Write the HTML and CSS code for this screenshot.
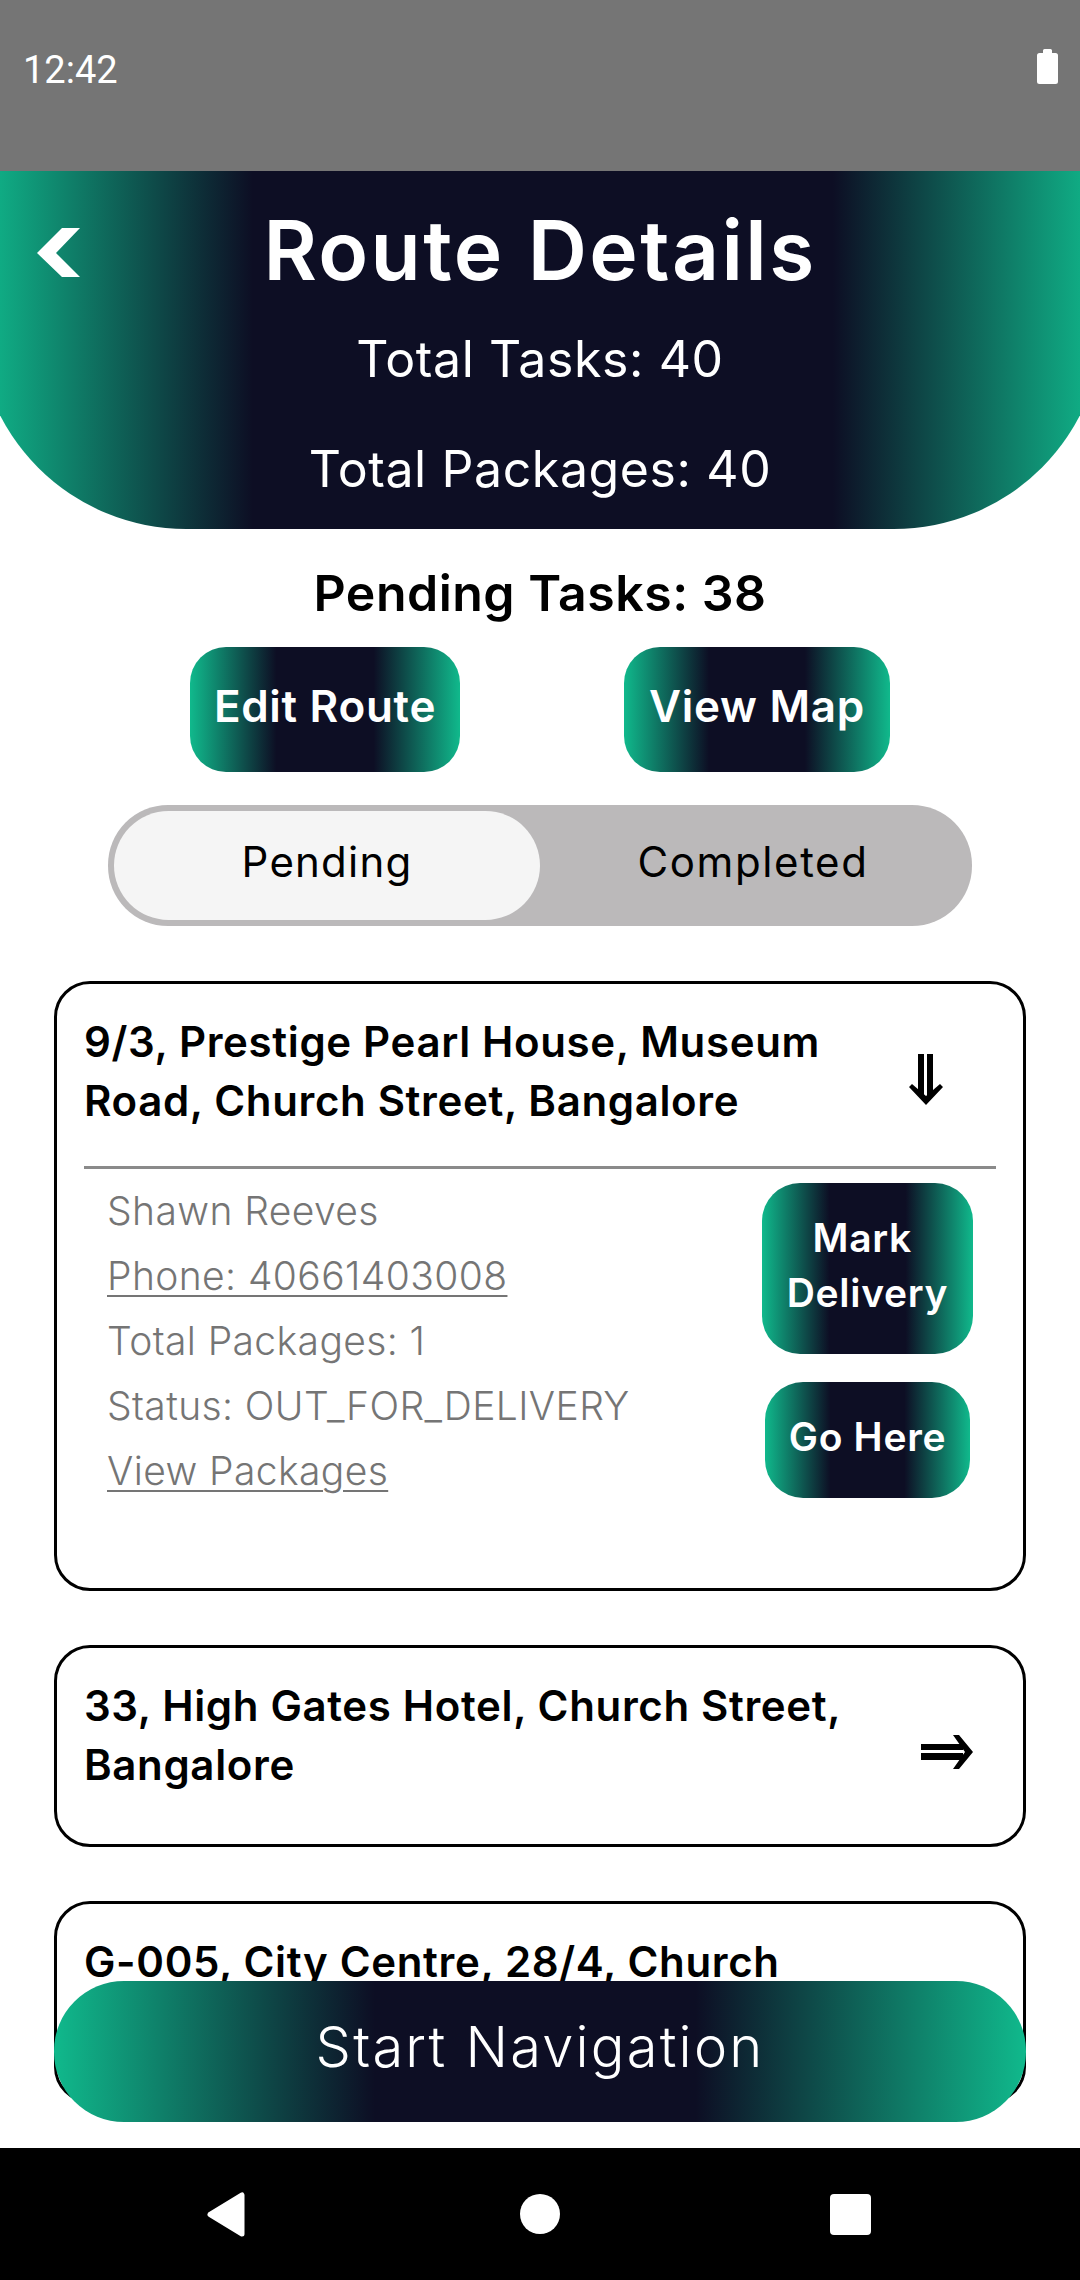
FILE: index.html
```html
<!DOCTYPE html>
<html>
<head>
    <title>Route Details</title>
    <link rel="stylesheet" href="styles.css">
</head>
<body>
    <div class="screen">
        <div class="status-bar">
            <span class="time">12:42</span>
            <svg class="battery" width="21" height="35" viewBox="0 0 21 35">
                <path d="M6 4V1.5Q6 0 7.500 0H13.500Q15 0 15 1.500V4H18.500Q21 4 21 6.500V32.500Q21 35 18.500 35H2.500Q0 35 0 32.500V6.500Q0 4 2.500 4Z" fill="#fff"/>
            </svg>
        </div>

        <div class="header">
            <svg class="back" width="43" height="49" viewBox="0 0 43 49">
                <polygon points="43,0 25,0 0,25 25,49 43,49 19,25" fill="#fff"/>
            </svg>
            <h1>Route Details</h1>
            <p class="total">Total Tasks: 40</p>
            <p class="total total-packages">Total Packages: 40</p>
        </div>

        <div class="content">
            <h2>Pending Tasks: 38</h2>
            <div class="actions">
                <button class="grad-btn edit-btn">Edit Route</button>
                <button class="grad-btn map-btn">View Map</button>
            </div>

            <div class="toggle">
                <div class="tab tab-active">Pending</div>
                <div class="tab">Completed</div>
            </div>

            <div class="card">
                <div class="card-head">
                    <div class="address">9/3, Prestige Pearl House, Museum<br>Road, Church Street, Bangalore</div>
                    <svg class="arrow-down" width="34" height="51" viewBox="0 0 34 51">
                        <rect x="9" y="0" width="6" height="42" fill="#000"/>
                        <rect x="18" y="0" width="6" height="42" fill="#000"/>
                        <polygon points="0,33 3,30 17,42 31,30 34,33 17,51" fill="#000"/>
                    </svg>
                </div>
                <div class="card-body">
                    <div class="info">
                        <div>Shawn Reeves</div>
                        <div class="link">Phone: 40661403008</div>
                        <div>Total Packages: 1</div>
                        <div>Status: OUT_FOR_DELIVERY</div>
                        <div class="link">View Packages</div>
                    </div>
                    <div class="card-actions">
                        <button class="grad-btn mark-btn">Mark&nbsp;<br>Delivery</button>
                        <button class="grad-btn here-btn">Go Here</button>
                    </div>
                </div>
            </div>

            <div class="card">
                <div class="card-head">
                    <div class="address">33, High Gates Hotel, Church Street,<br>Bangalore</div>
                    <svg class="arrow-right" width="52" height="34" viewBox="0 0 52 34">
                        <rect x="0" y="9" width="42" height="6" fill="#000"/>
                        <rect x="0" y="18" width="42" height="7" fill="#000"/>
                        <polygon points="32,0 38,0 52,17 38,34 32,34 44,17" fill="#000"/>
                    </svg>
                </div>
            </div>

            <div class="card">
                <div class="card-head">
                    <div class="address">G-005, City Centre, 28/4, Church<br>Street, Bangalore</div>
                    <svg class="arrow-right" width="52" height="34" viewBox="0 0 52 34">
                        <rect x="0" y="9" width="42" height="6" fill="#000"/>
                        <rect x="0" y="18" width="42" height="7" fill="#000"/>
                        <polygon points="32,0 38,0 52,17 38,34 32,34 44,17" fill="#000"/>
                    </svg>
                </div>
            </div>

            <button class="start-btn">Start Navigation</button>
        </div>

        <div class="nav-bar">
            <svg class="nav-back" width="38" height="45" viewBox="0 0 38 45">
                <polygon points="35,3 35,42 3,22.500" fill="#fff" stroke="#fff" stroke-width="5" stroke-linejoin="round"/>
            </svg>
            <div class="nav-home"></div>
            <div class="nav-recent"></div>
        </div>
    </div>
</body>
</html>
```

FILE: styles.css
```css
* {
    box-sizing: border-box;
}

body {
    margin: 0;
    font-family: Inter, "Noto Sans", sans-serif;
    background-color: #fff;
}

.screen {
    width: 1080px;
    height: 2280px;
    display: flex;
    flex-direction: column;
    overflow: hidden;
}

.status-bar {
    height: 171px;
    flex-shrink: 0;
    background-color: #757575;
    display: flex;
    justify-content: space-between;
    align-items: flex-start;
    padding: 48px 22px 0 23px;
}

.time {
    font-family: Roboto, sans-serif;
    font-size: 38px;
    line-height: 44px;
    color: #fff;
}

.battery {
    margin-top: 1px;
}

.header {
    position: relative;
    flex-shrink: 0;
    width: 1126px;
    margin-left: -23px;
    padding: 32px 0 25px;
    text-align: center;
    color: #fff;
    border-radius: 0 0 209px 209px;
    background: linear-gradient(to right, #10b98c 0%, #0d0e24 24.500%, #0d0e24 76%, #10b98c 100%);
}

.back {
    position: absolute;
    left: 60px;
    top: 57px;
}

h1 {
    margin: 0;
    font-size: 82px;
    line-height: 96px;
    font-weight: 600;
    letter-spacing: 2.4px;
}

.total {
    margin: 25px 0 0;
    font-size: 50px;
    line-height: 70px;
    font-weight: 400;
    letter-spacing: 0.6px;
}

.total-packages {
    margin-top: 40px;
}

.content {
    position: relative;
    flex: 1;
    overflow: hidden;
    padding-top: 29px;
}

h2 {
    margin: 0;
    text-align: center;
    font-size: 50px;
    line-height: 70px;
    font-weight: 600;
    letter-spacing: 0.5px;
    color: #000;
}

.grad-btn {
    border: none;
    padding: 0 0 7px;
    color: #fff;
    font-family: inherit;
    font-weight: 600;
    letter-spacing: 0.7px;
    background: linear-gradient(to right, #10b98c 0%, #0d0e24 32%, #0d0e24 68%, #10b98c 100%);
}

.actions {
    display: flex;
    justify-content: center;
    gap: 164px;
    margin-top: 19px;
}

.edit-btn,
.map-btn {
    height: 125px;
    font-size: 44px;
    border-radius: 36px;
}

.edit-btn {
    width: 270px;
}

.map-btn {
    width: 266px;
}

.toggle {
    display: flex;
    width: 864px;
    height: 121px;
    margin: 33px auto 0;
    padding: 6px;
    border-radius: 60px;
    background-color: #bbb9ba;
}

.tab {
    flex: 1;
    display: flex;
    align-items: center;
    justify-content: center;
    padding-bottom: 9px;
    font-size: 42px;
    letter-spacing: 1.2px;
    font-weight: 400;
    color: #000;
    border-radius: 56px;
}

.tab + .tab {
    letter-spacing: 1.6px;
}

.tab-active {
    background-color: #f5f5f5;
}

.card {
    margin: 54px 54px 0;
    padding: 28px 27px 14px;
    border: 3px solid #000;
    border-radius: 36px;
    background-color: #fff;
}

.toggle + .card {
    margin-top: 55px;
}

.card-head {
    display: flex;
    justify-content: space-between;
    align-items: center;
    padding-bottom: 36px;
}

.address {
    font-size: 42px;
    line-height: 59px;
    font-weight: 600;
    letter-spacing: 0.65px;
    color: #000;
}

.arrow-down {
    margin: 16px 53px 0 0;
}

.arrow-right {
    margin: 34px 23px 0 0;
}

.card-body {
    display: flex;
    justify-content: space-between;
    border-top: 3px solid #8a8a8a;
    padding: 9px 23px 71px;
}

.info {
    font-size: 39px;
    line-height: 65px;
    font-weight: 300;
    letter-spacing: 0.4px;
    color: #757575;
}

.link {
    text-decoration: underline;
    text-underline-offset: 5px;
    text-decoration-thickness: 2px;
}

.card-actions {
    display: flex;
    flex-direction: column;
    align-items: center;
    gap: 28px;
    padding-top: 5px;
}

.mark-btn,
.here-btn {
    font-size: 39px;
    line-height: 55px;
    border-radius: 38px;
}

.mark-btn {
    width: 211px;
    height: 171px;
}

.here-btn {
    width: 205px;
    height: 116px;
}

.start-btn {
    position: absolute;
    left: 54px;
    bottom: 26px;
    width: 972px;
    height: 141px;
    border: none;
    padding: 0 0 10px;
    border-radius: 70px;
    color: #fff;
    font-family: inherit;
    font-size: 56px;
    font-weight: 300;
    letter-spacing: 2.2px;
    background: linear-gradient(to right, #10b98c 0%, #0d0e24 33%, #0d0e24 66%, #10b98c 100%);
}

.nav-bar {
    height: 132px;
    flex-shrink: 0;
    display: flex;
    align-items: center;
    padding-left: 207px;
    background-color: #000;
}

.nav-home {
    width: 40px;
    height: 40px;
    margin-left: 275px;
    border-radius: 50%;
    background-color: #fff;
}

.nav-recent {
    width: 41px;
    height: 41px;
    margin-left: 270px;
    border-radius: 4px;
    background-color: #fff;
}
```
